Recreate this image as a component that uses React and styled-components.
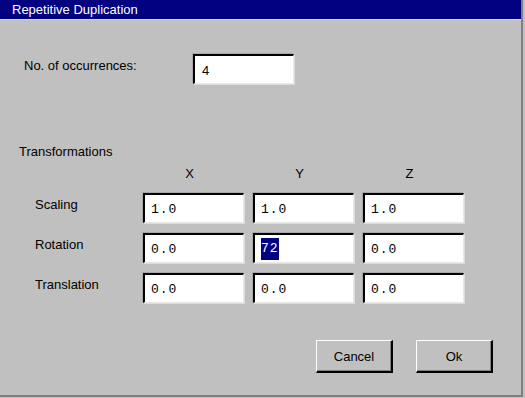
import React from "react";
import styled, { createGlobalStyle } from "styled-components";

const GlobalStyle = createGlobalStyle`
  html, body {
    margin: 0;
    padding: 0;
    background: #c0c0c0;
  }
  body {
    font-family: "Liberation Sans", Arial, sans-serif;
  }
`;

const Window = styled.div`
  width: 523px;
  height: 397px;
  box-sizing: border-box;
  background: #c0c0c0;
  border-right: 2px solid #808080;
  border-bottom: 2px solid #808080;
  display: flex;
  flex-direction: column;
`;

const TitleBar = styled.div`
  height: 19px;
  background: #000080;
  color: #fff;
  font-size: 13px;
  line-height: 19px;
  padding-left: 12px;
  border-bottom: 1px solid #d8d8d8;
`;

const Body = styled.div`
  flex: 1;
  display: flex;
  flex-direction: column;
  padding: 34px 0 0 0;
  font-size: 13px;
  color: #000;
`;

const OccurrenceRow = styled.div`
  display: flex;
  align-items: flex-start;
  padding-left: 24px;
`;

const Label = styled.span`
  width: ${(p) => p.$width}px;
  padding-top: ${(p) => p.$top || 0}px;
  line-height: 15px;
`;

const Field = styled.div`
  width: 101px;
  height: 30px;
  box-sizing: border-box;
  background: #fff;
  border-top: 2px solid #000;
  border-left: 2px solid #000;
  border-right: 1px solid #e8e8e8;
  border-bottom: 1px solid #e8e8e8;
  box-shadow: -1px -1px 0 #a8a8a8, 1px 1px 0 #dcdcdc;
  display: flex;
  align-items: center;
  padding-left: ${(p) => (p.$mono ? 6 : 7)}px;
  padding-top: 1px;
  font-family: ${(p) =>
    p.$mono
      ? `"Liberation Mono", "Courier New", monospace`
      : `"Liberation Sans", Arial, sans-serif`};
  font-size: 13px;
  letter-spacing: ${(p) => (p.$mono ? 1 : 0)}px;
`;

const Selected = styled.span`
  background: #000080;
  color: #fff;
  padding: 3px 0 4px;
`;

const SectionTitle = styled.div`
  margin-top: 60px;
  padding-left: 19px;
  line-height: 15px;
`;

const Grid = styled.div`
  display: grid;
  grid-template-columns: 99px repeat(3, 101px);
  column-gap: 9px;
  row-gap: 10px;
  margin-top: 7px;
  padding-left: 35px;
`;

const ColHead = styled.div`
  text-align: center;
  line-height: 15px;
  margin-bottom: 2px;
  padding-right: 8px;
`;

const RowLabel = styled.div`
  line-height: 15px;
  padding-top: 4px;
`;

const Buttons = styled.div`
  display: flex;
  gap: 23px;
  justify-content: flex-end;
  margin-top: 37px;
  padding-right: 28px;
`;

const Button = styled.button`
  width: 77px;
  height: 33px;
  box-sizing: border-box;
  background: #c0c0c0;
  border-top: 1px solid #fff;
  border-left: 1px solid #fff;
  border-right: 2px solid #000;
  border-bottom: 2px solid #000;
  box-shadow: inset -1px -1px 0 #808080;
  font-family: "Liberation Sans", Arial, sans-serif;
  font-size: 13px;
  color: #000;
  padding: 0;
`;

const rows = [
  { label: "Scaling", values: ["1.0", "1.0", "1.0"] },
  { label: "Rotation", values: ["0.0", "72", "0.0"], selected: 1 },
  { label: "Translation", values: ["0.0", "0.0", "0.0"] },
];

export default function App() {
  return (
    <>
      <GlobalStyle />
      <Window>
        <TitleBar>Repetitive Duplication</TitleBar>
        <Body>
          <OccurrenceRow>
            <Label $width={169} $top={4}>No. of occurrences:</Label>
            <Field>4</Field>
          </OccurrenceRow>

          <SectionTitle>Transformations</SectionTitle>

          <Grid>
            <div />
            <ColHead>X</ColHead>
            <ColHead>Y</ColHead>
            <ColHead>Z</ColHead>
            {rows.map((row) => (
              <React.Fragment key={row.label}>
                <RowLabel>{row.label}</RowLabel>
                {row.values.map((v, i) => (
                  <Field $mono key={i}>
                    {row.selected === i ? <Selected>{v}</Selected> : v}
                  </Field>
                ))}
              </React.Fragment>
            ))}
          </Grid>

          <Buttons>
            <Button>Cancel</Button>
            <Button>Ok</Button>
          </Buttons>
        </Body>
      </Window>
    </>
  );
}
